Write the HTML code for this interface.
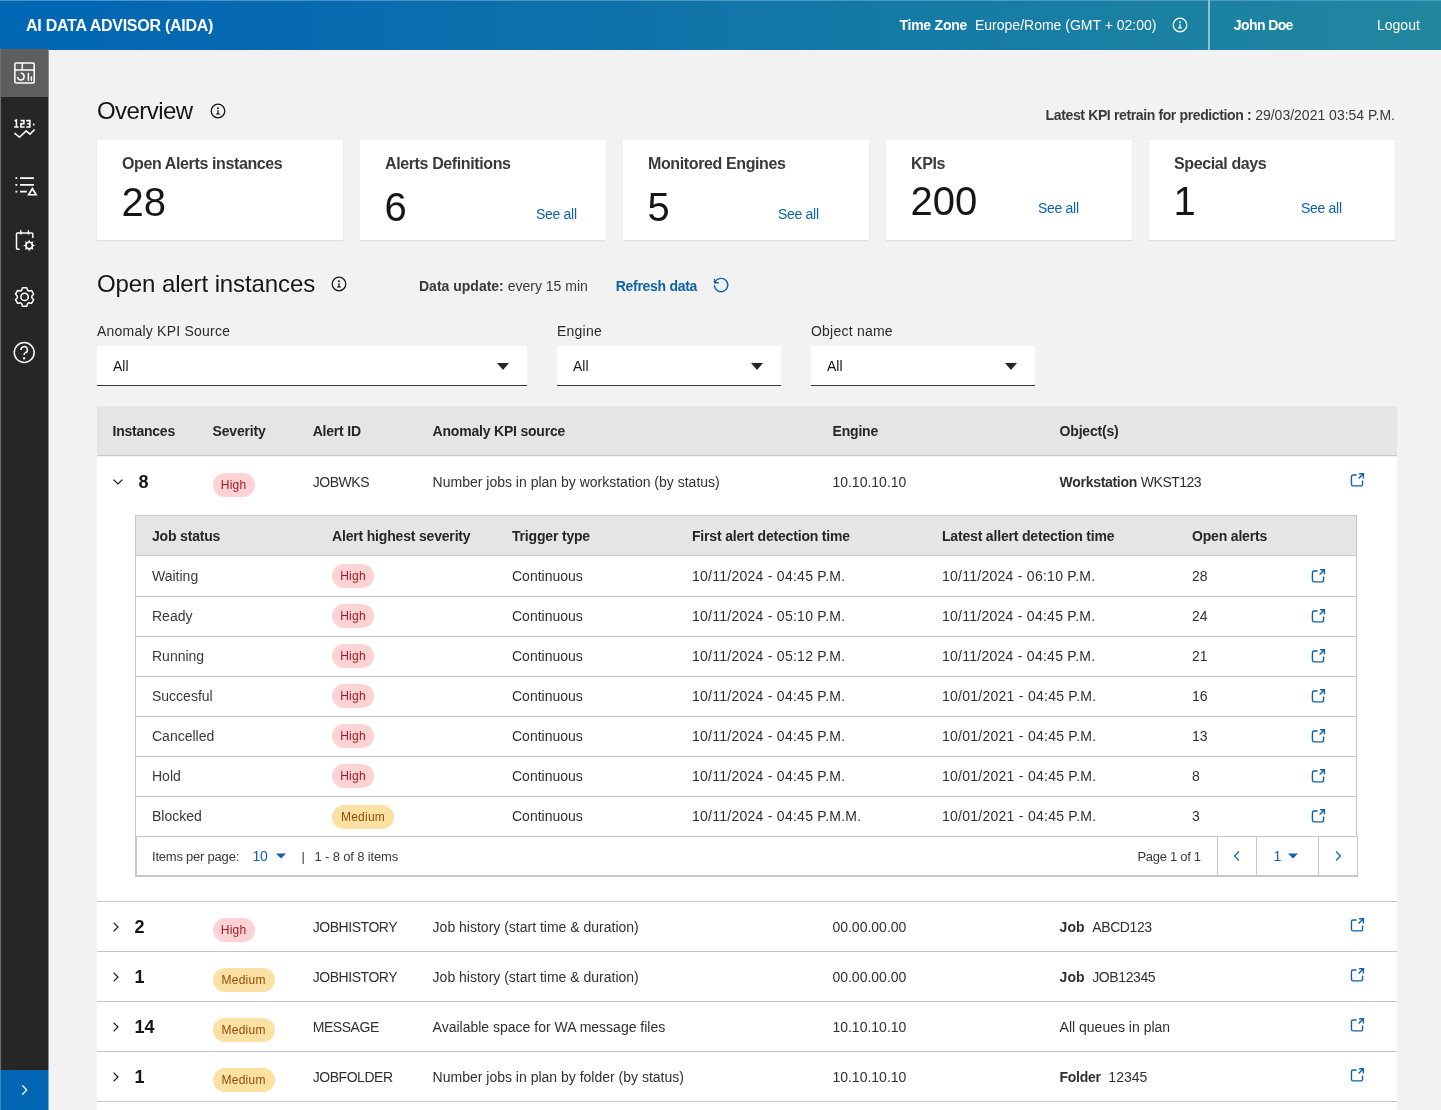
<!DOCTYPE html>
<html><head><meta charset="utf-8"><title>AIDA</title>
<style>
*{margin:0;padding:0;box-sizing:border-box}
html,body{width:1441px;height:1110px;overflow:hidden}
body{background:#f2f2f2;font-family:"Liberation Sans", sans-serif;position:relative;color:#161616;will-change:transform}
.t{position:absolute;white-space:nowrap;line-height:1}
.b{position:absolute}
.bd{position:absolute;height:24px;border-radius:12px;font-size:12px;line-height:25px;text-align:center;letter-spacing:.25px}
.hi{background:#ffd3d6;color:#a2191f}
.md{background:#fde0a3;color:#8c4f0a}
</style></head><body>
<div class="b" style="left:0px;top:0px;width:1441px;height:50px;background:linear-gradient(90deg,#0066b4 0%,#0568b2 15%,#1479a6 60%,#21879f 100%);"></div>
<div class="b" style="left:0px;top:0px;width:1441px;height:1px;background:#5b9fd0;opacity:.8"></div>
<div class="t" style="left:26px;top:18.06px;font-size:16px;font-weight:700;color:#fff;letter-spacing:-0.26px;">AI DATA ADVISOR (AIDA)</div>
<div class="t" style="left:899.4px;top:18.45px;font-size:14px;font-weight:700;color:#fff;letter-spacing:-0.22px;">Time Zone</div>
<div class="t" style="left:975px;top:18.45px;font-size:14px;font-weight:400;color:#fff;">Europe/Rome (GMT + 02:00)</div>
<svg class="b" style="left:1172.4px;top:17.4px" width="16" height="16" viewBox="0 0 16 16"><circle cx="8" cy="8" r="6.8" fill="none" stroke="#fff" stroke-width="1.25"/><circle cx="8" cy="5.3" r="1" fill="#fff"/><path d="M8 7.3v3.6" stroke="#fff" stroke-width="1.3" fill="none"/><path d="M6.1 11h3.8" stroke="#fff" stroke-width="1.1" fill="none"/></svg>
<div class="b" style="left:1208px;top:0px;width:2px;height:50px;background:#9ccbdb;opacity:.85"></div>
<div class="t" style="left:1233.8px;top:18.45px;font-size:14px;font-weight:700;color:#fff;letter-spacing:-0.6px;">John Doe</div>
<div class="t" style="left:1377px;top:18.45px;font-size:14px;font-weight:400;color:#fff;">Logout</div>
<div class="b" style="left:0px;top:49px;width:48px;height:1061px;background:#262626;"></div>
<div class="b" style="left:48px;top:49px;width:1px;height:1061px;background:#8c8c8c;"></div>
<div class="b" style="left:0px;top:49px;width:1px;height:1061px;background:#6e6e6e;"></div>
<div class="b" style="left:1px;top:49px;width:47px;height:48px;background:#5e5e5e;"></div>
<div class="b" style="left:0px;top:1070px;width:48px;height:40px;background:#0066b3;"></div>
<div class="b" style="left:48px;top:1070px;width:1px;height:40px;background:#7aaad4;"></div>
<div class="b" style="left:0px;top:1070px;width:1px;height:40px;background:#3a86c4;"></div>
<svg class="b" style="left:16px;top:1082px" width="16" height="16" viewBox="0 0 16 16"><path d="M6.2 3.2l4.6 4.8-4.6 4.8" fill="none" stroke="#fff" stroke-width="1.25"/></svg>
<svg class="b" style="left:10px;top:58px" width="30" height="30" viewBox="0 0 30 30"><rect x="4.85" y="5.05" width="19.35" height="19.85" rx="1.2" fill="none" stroke="#fff" stroke-width="1.5"/><path d="M4.85 11.9H24.2M12.3 5.05V11.9" fill="none" stroke="#fff" stroke-width="1.5"/><path d="M11.3 15.35A3.3 3.3 0 1 1 7.6 19.4" fill="none" stroke="#fff" stroke-width="1.5" stroke-linecap="round"/><path d="M18.4 15.6V22.2M21.4 19.1V22.2" fill="none" stroke="#fff" stroke-width="1.5" stroke-linecap="round"/></svg>
<svg class="b" style="left:10px;top:113px" width="30" height="30" viewBox="0 0 30 30"><path d="M4.6 7.8L6.4 7.2V14M4.2 14H8.6M10.6 7.6H13.9V10.8H10.9V14H14.6M16.2 7.6H19.9V14H16.2M17.2 10.8H19.9" fill="none" stroke="#fff" stroke-width="1.55"/><path d="M22.4 12.2L23.7 10L25 12.2Z" fill="#fff"/><path d="M4.4 20.2L9.5 24.2L16.2 17.9L20 21.1L24.6 16.5" fill="none" stroke="#fff" stroke-width="1.5" stroke-linejoin="round"/></svg>
<svg class="b" style="left:10px;top:171px" width="30" height="30" viewBox="0 0 30 30"><path d="M5.45 7.2H7.25M5.45 13.9H7.25M5.45 20.7H7.25M10 7.2H23.9M10 13.9H23.9M10 20.7H16.8" fill="none" stroke="#fff" stroke-width="1.8"/><path d="M22.35 17.6L18.6 23.75H26.1Z" fill="none" stroke="#fff" stroke-width="1.7" stroke-linejoin="miter"/></svg>
<svg class="b" style="left:10px;top:226px" width="30" height="30" viewBox="0 0 30 30"><path d="M9.7 23.2H7.5A1 1 0 0 1 6.5 22.2V7.9A1 1 0 0 1 7.5 6.9H21.8A1 1 0 0 1 22.8 7.9V11.9" fill="none" stroke="#fff" stroke-width="1.5"/><path d="M10.8 4.3V8.6M18.4 4.3V8.6" fill="none" stroke="#fff" stroke-width="1.5"/><circle cx="19.2" cy="19.5" r="3.25" fill="none" stroke="#fff" stroke-width="1.6"/><path d="M18.15 16.06 L19.20 13.40 L20.25 16.06ZM20.89 16.32 L23.51 15.19 L22.38 17.81ZM22.64 18.45 L25.30 19.50 L22.64 20.55ZM22.38 21.19 L23.51 23.81 L20.89 22.68ZM20.25 22.94 L19.20 25.60 L18.15 22.94ZM17.51 22.68 L14.89 23.81 L16.02 21.19ZM15.76 20.55 L13.10 19.50 L15.76 18.45ZM16.02 17.81 L14.89 15.19 L17.51 16.32Z" fill="#fff"/></svg>
<svg class="b" style="left:10px;top:282px" width="30" height="30" viewBox="0 0 30 30"><path d="M11.63 8.23 L12.46 5.64 L16.74 5.64 L17.57 8.23 L18.89 8.99 L21.55 8.42 L23.68 12.12 L21.86 14.14 L21.86 15.66 L23.68 17.68 L21.55 21.38 L18.89 20.81 L17.57 21.57 L16.74 24.16 L12.46 24.16 L11.63 21.57 L10.31 20.81 L7.65 21.38 L5.52 17.68 L7.34 15.66 L7.34 14.14 L5.52 12.12 L7.65 8.42 L10.31 8.99Z" fill="none" stroke="#fff" stroke-width="1.5" stroke-linejoin="round"/><circle cx="14.6" cy="14.9" r="3.7" fill="none" stroke="#fff" stroke-width="1.5"/></svg>
<svg class="b" style="left:10px;top:338px" width="30" height="30" viewBox="0 0 30 30"><circle cx="14.2" cy="14.5" r="9.95" fill="none" stroke="#fff" stroke-width="1.5"/><path d="M10.9 11.9A3.25 3.25 0 1 1 15.3 14.9C14.5 15.3 14.1 15.7 14.1 16.5V16.9" fill="none" stroke="#fff" stroke-width="1.5"/><rect x="13.05" y="19.25" width="2.1" height="2.1" fill="#fff"/></svg>
<div class="t" style="left:97px;top:98.68px;font-size:24px;font-weight:400;color:#161616;letter-spacing:-0.55px;">Overview</div>
<svg class="b" style="left:209.5px;top:102.8px" width="16" height="16" viewBox="0 0 16 16"><circle cx="8" cy="8" r="6.8" fill="none" stroke="#161616" stroke-width="1.25"/><circle cx="8" cy="5.3" r="1" fill="#161616"/><path d="M8 7.3v3.6" stroke="#161616" stroke-width="1.3" fill="none"/><path d="M6.1 11h3.8" stroke="#161616" stroke-width="1.1" fill="none"/></svg>
<div class="t" style="right:46px;top:107.65px;font-size:14px;font-weight:400;color:#393939;"><b style="letter-spacing:-0.37px">Latest KPI retrain for prediction :</b> 29/03/2021 03:54 P.M.</div>
<div class="b" style="left:97px;top:140px;width:246px;height:100px;background:#fff;box-shadow:0 1px 1px rgba(0,0,0,.07);"></div>
<div class="t" style="left:122px;top:155.66px;font-size:16px;font-weight:700;color:#393939;letter-spacing:-0.38px;">Open Alerts instances</div>
<div class="t" style="left:121.5px;top:182.14px;font-size:40px;font-weight:400;color:#161616;">28</div>
<div class="b" style="left:360px;top:140px;width:246px;height:100px;background:#fff;box-shadow:0 1px 1px rgba(0,0,0,.07);"></div>
<div class="t" style="left:385px;top:155.66px;font-size:16px;font-weight:700;color:#393939;letter-spacing:-0.38px;">Alerts Definitions</div>
<div class="t" style="left:384.5px;top:186.64px;font-size:40px;font-weight:400;color:#161616;">6</div>
<div class="t" style="left:536px;top:207.15px;font-size:14px;font-weight:400;color:#0f62a8;letter-spacing:-0.3px;">See all</div>
<div class="b" style="left:623px;top:140px;width:246px;height:100px;background:#fff;box-shadow:0 1px 1px rgba(0,0,0,.07);"></div>
<div class="t" style="left:648px;top:155.66px;font-size:16px;font-weight:700;color:#393939;letter-spacing:-0.38px;">Monitored Engines</div>
<div class="t" style="left:647.5px;top:186.64px;font-size:40px;font-weight:400;color:#161616;">5</div>
<div class="t" style="left:778px;top:207.15px;font-size:14px;font-weight:400;color:#0f62a8;letter-spacing:-0.3px;">See all</div>
<div class="b" style="left:886px;top:140px;width:246px;height:100px;background:#fff;box-shadow:0 1px 1px rgba(0,0,0,.07);"></div>
<div class="t" style="left:911px;top:155.66px;font-size:16px;font-weight:700;color:#393939;letter-spacing:-0.38px;">KPIs</div>
<div class="t" style="left:910.5px;top:180.64px;font-size:40px;font-weight:400;color:#161616;">200</div>
<div class="t" style="left:1038px;top:201.15px;font-size:14px;font-weight:400;color:#0f62a8;letter-spacing:-0.3px;">See all</div>
<div class="b" style="left:1149px;top:140px;width:246px;height:100px;background:#fff;box-shadow:0 1px 1px rgba(0,0,0,.07);"></div>
<div class="t" style="left:1174px;top:155.66px;font-size:16px;font-weight:700;color:#393939;letter-spacing:-0.38px;">Special days</div>
<div class="t" style="left:1173.5px;top:180.64px;font-size:40px;font-weight:400;color:#161616;">1</div>
<div class="t" style="left:1301px;top:201.15px;font-size:14px;font-weight:400;color:#0f62a8;letter-spacing:-0.3px;">See all</div>
<div class="t" style="left:97px;top:271.68px;font-size:24px;font-weight:400;color:#161616;letter-spacing:-0.1px;">Open alert instances</div>
<svg class="b" style="left:331px;top:276px" width="16" height="16" viewBox="0 0 16 16"><circle cx="8" cy="8" r="6.8" fill="none" stroke="#161616" stroke-width="1.25"/><circle cx="8" cy="5.3" r="1" fill="#161616"/><path d="M8 7.3v3.6" stroke="#161616" stroke-width="1.3" fill="none"/><path d="M6.1 11h3.8" stroke="#161616" stroke-width="1.1" fill="none"/></svg>
<div class="t" style="left:419px;top:279.15px;font-size:14px;font-weight:400;color:#393939;"><b>Data update:</b> every 15 min</div>
<div class="t" style="left:615.8px;top:279.15px;font-size:14px;font-weight:700;color:#0f62a8;letter-spacing:-0.3px;">Refresh data</div>
<svg class="b" style="left:712.4px;top:276px" width="18" height="18" viewBox="0 0 18 18"><path d="M2.4 9.3A6.7 6.7 0 1 0 3.13 5.96" fill="none" stroke="#0f62a8" stroke-width="1.35"/><path d="M2.5 3.0V6.7H6.7" fill="none" stroke="#0f62a8" stroke-width="1.35"/></svg>
<div class="t" style="left:97px;top:324.35px;font-size:14px;font-weight:400;color:#2a2a2a;letter-spacing:0.22px;">Anomaly KPI Source</div>
<div class="b" style="left:97px;top:346px;width:430px;height:40px;background:#fff;border-bottom:1px solid #393939;"></div>
<div class="t" style="left:113px;top:359.45px;font-size:14px;font-weight:400;color:#161616;">All</div>
<svg class="b" style="left:496px;top:362px" width="14" height="9" viewBox="0 0 14 9"><path d="M1 1h12L7 8z" fill="#262626"/></svg>
<div class="t" style="left:557px;top:324.35px;font-size:14px;font-weight:400;color:#2a2a2a;letter-spacing:0.22px;">Engine</div>
<div class="b" style="left:557px;top:346px;width:224px;height:40px;background:#fff;border-bottom:1px solid #393939;"></div>
<div class="t" style="left:573px;top:359.45px;font-size:14px;font-weight:400;color:#161616;">All</div>
<svg class="b" style="left:750px;top:362px" width="14" height="9" viewBox="0 0 14 9"><path d="M1 1h12L7 8z" fill="#262626"/></svg>
<div class="t" style="left:811px;top:324.35px;font-size:14px;font-weight:400;color:#2a2a2a;letter-spacing:0.22px;">Object name</div>
<div class="b" style="left:811px;top:346px;width:224px;height:40px;background:#fff;border-bottom:1px solid #393939;"></div>
<div class="t" style="left:827px;top:359.45px;font-size:14px;font-weight:400;color:#161616;">All</div>
<svg class="b" style="left:1004px;top:362px" width="14" height="9" viewBox="0 0 14 9"><path d="M1 1h12L7 8z" fill="#262626"/></svg>
<div class="b" style="left:97px;top:406px;width:1300px;height:50px;background:#e5e5e5;border-bottom:1px solid #c6c6c6;"></div>
<div class="t" style="left:112.6px;top:424.15px;font-size:14px;font-weight:700;color:#262626;letter-spacing:-0.25px;">Instances</div>
<div class="t" style="left:212.6px;top:424.15px;font-size:14px;font-weight:700;color:#262626;letter-spacing:-0.2px;">Severity</div>
<div class="t" style="left:312.7px;top:424.15px;font-size:14px;font-weight:700;color:#262626;letter-spacing:-0.2px;">Alert ID</div>
<div class="t" style="left:432.6px;top:424.15px;font-size:14px;font-weight:700;color:#262626;letter-spacing:-0.2px;">Anomaly KPI source</div>
<div class="t" style="left:832.6px;top:424.15px;font-size:14px;font-weight:700;color:#262626;letter-spacing:-0.2px;">Engine</div>
<div class="t" style="left:1059.6px;top:424.15px;font-size:14px;font-weight:700;color:#262626;letter-spacing:-0.2px;">Object(s)</div>
<div class="b" style="left:97px;top:457px;width:1300px;height:444px;background:#fff;"></div>
<svg class="b" style="left:110.5px;top:475px" width="14" height="14" viewBox="0 0 14 14"><path d="M2.6 4.6L7 9l4.4-4.4" fill="none" stroke="#161616" stroke-width="1.2"/></svg>
<div class="t" style="left:138.5px;top:472.76px;font-size:18px;font-weight:700;color:#161616;">8</div>
<div class="bd hi" style="left:212.6px;top:473.2px;width:42px">High</div>
<div class="t" style="left:312.7px;top:475.15px;font-size:14px;font-weight:400;color:#303030;letter-spacing:-0.45px;">JOBWKS</div>
<div class="t" style="left:432.6px;top:475.15px;font-size:14px;font-weight:400;color:#303030;">Number jobs in plan by workstation (by status)</div>
<div class="t" style="left:832.4px;top:475.15px;font-size:14px;font-weight:400;color:#303030;">10.10.10.10</div>
<div class="t" style="left:1059.6px;top:475.15px;font-size:14px;font-weight:400;color:#303030;"><b style="letter-spacing:-0.3px">Workstation</b> <span style="letter-spacing:-0.5px">WKST123</span></div>
<svg class="b" style="left:1344.2px;top:467px" width="26" height="26" viewBox="0 0 26 26"><path d="M12.6 7.95H9.2A1.75 1.75 0 0 0 7.45 9.7V17.15A1.75 1.75 0 0 0 9.2 18.9H16.8A1.75 1.75 0 0 0 18.55 17.15V13.4" fill="none" stroke="#0f62a8" stroke-width="1.4"/><path d="M15.1 6.8H19.4V11.4M19.2 7L14.6 11.6" fill="none" stroke="#0f62a8" stroke-width="1.4"/></svg>
<div class="b" style="left:135px;top:515px;width:1222px;height:322px;border:1px solid #c6c6c6;border-bottom:none;background:#fff;"></div>
<div class="b" style="left:136px;top:516px;width:1220px;height:40px;background:#e5e5e5;border-bottom:1px solid #c6c6c6;"></div>
<div class="t" style="left:152px;top:528.75px;font-size:14px;font-weight:700;color:#262626;letter-spacing:-0.18px;">Job status</div>
<div class="t" style="left:332px;top:528.75px;font-size:14px;font-weight:700;color:#262626;letter-spacing:-0.18px;">Alert highest severity</div>
<div class="t" style="left:512px;top:528.75px;font-size:14px;font-weight:700;color:#262626;letter-spacing:-0.18px;">Trigger type</div>
<div class="t" style="left:692px;top:528.75px;font-size:14px;font-weight:700;color:#262626;letter-spacing:-0.18px;">First alert detection time</div>
<div class="t" style="left:942px;top:528.75px;font-size:14px;font-weight:700;color:#262626;letter-spacing:-0.18px;">Latest allert detection time</div>
<div class="t" style="left:1192px;top:528.75px;font-size:14px;font-weight:700;color:#262626;letter-spacing:-0.18px;">Open alerts</div>
<div class="t" style="left:152px;top:568.95px;font-size:14px;font-weight:400;color:#393939;">Waiting</div>
<div class="bd hi" style="left:332px;top:564px;width:42px">High</div>
<div class="t" style="left:512px;top:568.95px;font-size:14px;font-weight:400;color:#303030;">Continuous</div>
<div class="t" style="left:692px;top:568.95px;font-size:14px;font-weight:400;color:#303030;letter-spacing:0.26px;">10/11/2024 - 04:45 P.M.</div>
<div class="t" style="left:942px;top:568.95px;font-size:14px;font-weight:400;color:#303030;letter-spacing:0.26px;">10/11/2024 - 06:10 P.M.</div>
<div class="t" style="left:1192px;top:568.95px;font-size:14px;font-weight:400;color:#303030;">28</div>
<svg class="b" style="left:1305px;top:563px" width="26" height="26" viewBox="0 0 26 26"><path d="M12.6 7.95H9.2A1.75 1.75 0 0 0 7.45 9.7V17.15A1.75 1.75 0 0 0 9.2 18.9H16.8A1.75 1.75 0 0 0 18.55 17.15V13.4" fill="none" stroke="#0f62a8" stroke-width="1.4"/><path d="M15.1 6.8H19.4V11.4M19.2 7L14.6 11.6" fill="none" stroke="#0f62a8" stroke-width="1.4"/></svg>
<div class="b" style="left:136px;top:596px;width:1220px;height:1px;background:#c6c6c6;"></div>
<div class="t" style="left:152px;top:608.95px;font-size:14px;font-weight:400;color:#393939;">Ready</div>
<div class="bd hi" style="left:332px;top:604px;width:42px">High</div>
<div class="t" style="left:512px;top:608.95px;font-size:14px;font-weight:400;color:#303030;">Continuous</div>
<div class="t" style="left:692px;top:608.95px;font-size:14px;font-weight:400;color:#303030;letter-spacing:0.26px;">10/11/2024 - 05:10 P.M.</div>
<div class="t" style="left:942px;top:608.95px;font-size:14px;font-weight:400;color:#303030;letter-spacing:0.26px;">10/11/2024 - 04:45 P.M.</div>
<div class="t" style="left:1192px;top:608.95px;font-size:14px;font-weight:400;color:#303030;">24</div>
<svg class="b" style="left:1305px;top:603px" width="26" height="26" viewBox="0 0 26 26"><path d="M12.6 7.95H9.2A1.75 1.75 0 0 0 7.45 9.7V17.15A1.75 1.75 0 0 0 9.2 18.9H16.8A1.75 1.75 0 0 0 18.55 17.15V13.4" fill="none" stroke="#0f62a8" stroke-width="1.4"/><path d="M15.1 6.8H19.4V11.4M19.2 7L14.6 11.6" fill="none" stroke="#0f62a8" stroke-width="1.4"/></svg>
<div class="b" style="left:136px;top:636px;width:1220px;height:1px;background:#c6c6c6;"></div>
<div class="t" style="left:152px;top:648.95px;font-size:14px;font-weight:400;color:#393939;">Running</div>
<div class="bd hi" style="left:332px;top:644px;width:42px">High</div>
<div class="t" style="left:512px;top:648.95px;font-size:14px;font-weight:400;color:#303030;">Continuous</div>
<div class="t" style="left:692px;top:648.95px;font-size:14px;font-weight:400;color:#303030;letter-spacing:0.26px;">10/11/2024 - 05:12 P.M.</div>
<div class="t" style="left:942px;top:648.95px;font-size:14px;font-weight:400;color:#303030;letter-spacing:0.26px;">10/11/2024 - 04:45 P.M.</div>
<div class="t" style="left:1192px;top:648.95px;font-size:14px;font-weight:400;color:#303030;">21</div>
<svg class="b" style="left:1305px;top:643px" width="26" height="26" viewBox="0 0 26 26"><path d="M12.6 7.95H9.2A1.75 1.75 0 0 0 7.45 9.7V17.15A1.75 1.75 0 0 0 9.2 18.9H16.8A1.75 1.75 0 0 0 18.55 17.15V13.4" fill="none" stroke="#0f62a8" stroke-width="1.4"/><path d="M15.1 6.8H19.4V11.4M19.2 7L14.6 11.6" fill="none" stroke="#0f62a8" stroke-width="1.4"/></svg>
<div class="b" style="left:136px;top:676px;width:1220px;height:1px;background:#c6c6c6;"></div>
<div class="t" style="left:152px;top:688.95px;font-size:14px;font-weight:400;color:#393939;">Succesful</div>
<div class="bd hi" style="left:332px;top:684px;width:42px">High</div>
<div class="t" style="left:512px;top:688.95px;font-size:14px;font-weight:400;color:#303030;">Continuous</div>
<div class="t" style="left:692px;top:688.95px;font-size:14px;font-weight:400;color:#303030;letter-spacing:0.26px;">10/11/2024 - 04:45 P.M.</div>
<div class="t" style="left:942px;top:688.95px;font-size:14px;font-weight:400;color:#303030;letter-spacing:0.26px;">10/01/2021 - 04:45 P.M.</div>
<div class="t" style="left:1192px;top:688.95px;font-size:14px;font-weight:400;color:#303030;">16</div>
<svg class="b" style="left:1305px;top:683px" width="26" height="26" viewBox="0 0 26 26"><path d="M12.6 7.95H9.2A1.75 1.75 0 0 0 7.45 9.7V17.15A1.75 1.75 0 0 0 9.2 18.9H16.8A1.75 1.75 0 0 0 18.55 17.15V13.4" fill="none" stroke="#0f62a8" stroke-width="1.4"/><path d="M15.1 6.8H19.4V11.4M19.2 7L14.6 11.6" fill="none" stroke="#0f62a8" stroke-width="1.4"/></svg>
<div class="b" style="left:136px;top:716px;width:1220px;height:1px;background:#c6c6c6;"></div>
<div class="t" style="left:152px;top:728.95px;font-size:14px;font-weight:400;color:#393939;">Cancelled</div>
<div class="bd hi" style="left:332px;top:724px;width:42px">High</div>
<div class="t" style="left:512px;top:728.95px;font-size:14px;font-weight:400;color:#303030;">Continuous</div>
<div class="t" style="left:692px;top:728.95px;font-size:14px;font-weight:400;color:#303030;letter-spacing:0.26px;">10/11/2024 - 04:45 P.M.</div>
<div class="t" style="left:942px;top:728.95px;font-size:14px;font-weight:400;color:#303030;letter-spacing:0.26px;">10/01/2021 - 04:45 P.M.</div>
<div class="t" style="left:1192px;top:728.95px;font-size:14px;font-weight:400;color:#303030;">13</div>
<svg class="b" style="left:1305px;top:723px" width="26" height="26" viewBox="0 0 26 26"><path d="M12.6 7.95H9.2A1.75 1.75 0 0 0 7.45 9.7V17.15A1.75 1.75 0 0 0 9.2 18.9H16.8A1.75 1.75 0 0 0 18.55 17.15V13.4" fill="none" stroke="#0f62a8" stroke-width="1.4"/><path d="M15.1 6.8H19.4V11.4M19.2 7L14.6 11.6" fill="none" stroke="#0f62a8" stroke-width="1.4"/></svg>
<div class="b" style="left:136px;top:756px;width:1220px;height:1px;background:#c6c6c6;"></div>
<div class="t" style="left:152px;top:768.95px;font-size:14px;font-weight:400;color:#393939;">Hold</div>
<div class="bd hi" style="left:332px;top:764px;width:42px">High</div>
<div class="t" style="left:512px;top:768.95px;font-size:14px;font-weight:400;color:#303030;">Continuous</div>
<div class="t" style="left:692px;top:768.95px;font-size:14px;font-weight:400;color:#303030;letter-spacing:0.26px;">10/11/2024 - 04:45 P.M.</div>
<div class="t" style="left:942px;top:768.95px;font-size:14px;font-weight:400;color:#303030;letter-spacing:0.26px;">10/01/2021 - 04:45 P.M.</div>
<div class="t" style="left:1192px;top:768.95px;font-size:14px;font-weight:400;color:#303030;">8</div>
<svg class="b" style="left:1305px;top:763px" width="26" height="26" viewBox="0 0 26 26"><path d="M12.6 7.95H9.2A1.75 1.75 0 0 0 7.45 9.7V17.15A1.75 1.75 0 0 0 9.2 18.9H16.8A1.75 1.75 0 0 0 18.55 17.15V13.4" fill="none" stroke="#0f62a8" stroke-width="1.4"/><path d="M15.1 6.8H19.4V11.4M19.2 7L14.6 11.6" fill="none" stroke="#0f62a8" stroke-width="1.4"/></svg>
<div class="b" style="left:136px;top:796px;width:1220px;height:1px;background:#c6c6c6;"></div>
<div class="t" style="left:152px;top:808.95px;font-size:14px;font-weight:400;color:#393939;">Blocked</div>
<div class="bd md" style="left:332px;top:805px;width:62px">Medium</div>
<div class="t" style="left:512px;top:808.95px;font-size:14px;font-weight:400;color:#303030;">Continuous</div>
<div class="t" style="left:692px;top:808.95px;font-size:14px;font-weight:400;color:#303030;letter-spacing:0.26px;">10/11/2024 - 04:45 P.M.M.</div>
<div class="t" style="left:942px;top:808.95px;font-size:14px;font-weight:400;color:#303030;letter-spacing:0.26px;">10/01/2021 - 04:45 P.M.</div>
<div class="t" style="left:1192px;top:808.95px;font-size:14px;font-weight:400;color:#303030;">3</div>
<svg class="b" style="left:1305px;top:803px" width="26" height="26" viewBox="0 0 26 26"><path d="M12.6 7.95H9.2A1.75 1.75 0 0 0 7.45 9.7V17.15A1.75 1.75 0 0 0 9.2 18.9H16.8A1.75 1.75 0 0 0 18.55 17.15V13.4" fill="none" stroke="#0f62a8" stroke-width="1.4"/><path d="M15.1 6.8H19.4V11.4M19.2 7L14.6 11.6" fill="none" stroke="#0f62a8" stroke-width="1.4"/></svg>
<div class="b" style="left:135px;top:836px;width:1223px;height:41px;background:#fff;border-top:1px solid #c6c6c6;border-left:2px solid #c6c6c6;border-right:1px solid #c6c6c6;border-bottom:2px solid #c6c6c6;"></div>
<div class="t" style="left:152px;top:849.50px;font-size:13px;font-weight:400;color:#393939;letter-spacing:-0.22px;">Items per page:</div>
<div class="t" style="left:252.5px;top:849.15px;font-size:14px;font-weight:400;color:#0f62a8;letter-spacing:-0.3px;">10</div>
<svg class="b" style="left:275px;top:852px" width="12" height="8" viewBox="0 0 12 8"><path d="M1 1.5h10L6 6.5z" fill="#0f62a8"/></svg>
<div class="t" style="left:301.5px;top:849.50px;font-size:13px;font-weight:400;color:#393939;">|</div>
<div class="t" style="left:314.5px;top:849.50px;font-size:13px;font-weight:400;color:#393939;letter-spacing:-0.15px;">1 - 8 of 8 items</div>
<div class="t" style="left:1137.5px;top:849.50px;font-size:13px;font-weight:400;color:#393939;letter-spacing:-0.3px;">Page 1 of 1</div>
<div class="b" style="left:1217px;top:837px;width:1px;height:38px;background:#c6c6c6;"></div>
<div class="b" style="left:1256px;top:837px;width:1px;height:38px;background:#c6c6c6;"></div>
<div class="b" style="left:1318px;top:837px;width:1px;height:38px;background:#c6c6c6;"></div>
<svg class="b" style="left:1229px;top:848px" width="16" height="16" viewBox="0 0 16 16"><path d="M10 3.5L5.5 8l4.5 4.5" fill="none" stroke="#0f62a8" stroke-width="1.2"/></svg>
<div class="t" style="left:1273.5px;top:849.15px;font-size:14px;font-weight:400;color:#0f62a8;">1</div>
<svg class="b" style="left:1287px;top:852px" width="12" height="8" viewBox="0 0 12 8"><path d="M1 1.5h10L6 6.5z" fill="#0f62a8"/></svg>
<svg class="b" style="left:1330px;top:848px" width="16" height="16" viewBox="0 0 16 16"><path d="M6 3.5l4.5 4.5L6 12.5" fill="none" stroke="#0f62a8" stroke-width="1.2"/></svg>
<div class="b" style="left:97px;top:901px;width:1300px;height:50px;background:#fff;border-top:1px solid #c6c6c6;"></div>
<svg class="b" style="left:108.5px;top:920.4px" width="14" height="14" viewBox="0 0 14 14"><path d="M4.6 2.6L9 7l-4.4 4.4" fill="none" stroke="#161616" stroke-width="1.2"/></svg>
<div class="t" style="left:134.5px;top:918.36px;font-size:18px;font-weight:700;color:#161616;">2</div>
<div class="bd hi" style="left:212.6px;top:918px;width:42px">High</div>
<div class="t" style="left:312.7px;top:919.75px;font-size:14px;font-weight:400;color:#303030;letter-spacing:-0.45px;">JOBHISTORY</div>
<div class="t" style="left:432.6px;top:919.75px;font-size:14px;font-weight:400;color:#303030;">Job history (start time &amp; duration)</div>
<div class="t" style="left:832.4px;top:919.75px;font-size:14px;font-weight:400;color:#303030;">00.00.00.00</div>
<div class="t" style="left:1059.6px;top:919.75px;font-size:14px;font-weight:400;color:#303030;"><b>Job</b>&nbsp; <span style="letter-spacing:-0.4px">ABCD123</span></div>
<svg class="b" style="left:1344.2px;top:912.2px" width="26" height="26" viewBox="0 0 26 26"><path d="M12.6 7.95H9.2A1.75 1.75 0 0 0 7.45 9.7V17.15A1.75 1.75 0 0 0 9.2 18.9H16.8A1.75 1.75 0 0 0 18.55 17.15V13.4" fill="none" stroke="#0f62a8" stroke-width="1.4"/><path d="M15.1 6.8H19.4V11.4M19.2 7L14.6 11.6" fill="none" stroke="#0f62a8" stroke-width="1.4"/></svg>
<div class="b" style="left:97px;top:951px;width:1300px;height:50px;background:#fff;border-top:1px solid #c6c6c6;"></div>
<svg class="b" style="left:108.5px;top:970.4px" width="14" height="14" viewBox="0 0 14 14"><path d="M4.6 2.6L9 7l-4.4 4.4" fill="none" stroke="#161616" stroke-width="1.2"/></svg>
<div class="t" style="left:134.5px;top:968.36px;font-size:18px;font-weight:700;color:#161616;">1</div>
<div class="bd md" style="left:212.6px;top:968px;width:62px">Medium</div>
<div class="t" style="left:312.7px;top:969.75px;font-size:14px;font-weight:400;color:#303030;letter-spacing:-0.45px;">JOBHISTORY</div>
<div class="t" style="left:432.6px;top:969.75px;font-size:14px;font-weight:400;color:#303030;">Job history (start time &amp; duration)</div>
<div class="t" style="left:832.4px;top:969.75px;font-size:14px;font-weight:400;color:#303030;">00.00.00.00</div>
<div class="t" style="left:1059.6px;top:969.75px;font-size:14px;font-weight:400;color:#303030;"><b>Job</b>&nbsp; <span style="letter-spacing:-0.4px">JOB12345</span></div>
<svg class="b" style="left:1344.2px;top:962.2px" width="26" height="26" viewBox="0 0 26 26"><path d="M12.6 7.95H9.2A1.75 1.75 0 0 0 7.45 9.7V17.15A1.75 1.75 0 0 0 9.2 18.9H16.8A1.75 1.75 0 0 0 18.55 17.15V13.4" fill="none" stroke="#0f62a8" stroke-width="1.4"/><path d="M15.1 6.8H19.4V11.4M19.2 7L14.6 11.6" fill="none" stroke="#0f62a8" stroke-width="1.4"/></svg>
<div class="b" style="left:97px;top:1001px;width:1300px;height:50px;background:#fff;border-top:1px solid #c6c6c6;"></div>
<svg class="b" style="left:108.5px;top:1020.4px" width="14" height="14" viewBox="0 0 14 14"><path d="M4.6 2.6L9 7l-4.4 4.4" fill="none" stroke="#161616" stroke-width="1.2"/></svg>
<div class="t" style="left:134.5px;top:1018.36px;font-size:18px;font-weight:700;color:#161616;">14</div>
<div class="bd md" style="left:212.6px;top:1018px;width:62px">Medium</div>
<div class="t" style="left:312.7px;top:1019.75px;font-size:14px;font-weight:400;color:#303030;letter-spacing:-0.45px;">MESSAGE</div>
<div class="t" style="left:432.6px;top:1019.75px;font-size:14px;font-weight:400;color:#303030;">Available space for WA message files</div>
<div class="t" style="left:832.4px;top:1019.75px;font-size:14px;font-weight:400;color:#303030;">10.10.10.10</div>
<div class="t" style="left:1059.6px;top:1019.75px;font-size:14px;font-weight:400;color:#303030;">All queues in plan</div>
<svg class="b" style="left:1344.2px;top:1012.2px" width="26" height="26" viewBox="0 0 26 26"><path d="M12.6 7.95H9.2A1.75 1.75 0 0 0 7.45 9.7V17.15A1.75 1.75 0 0 0 9.2 18.9H16.8A1.75 1.75 0 0 0 18.55 17.15V13.4" fill="none" stroke="#0f62a8" stroke-width="1.4"/><path d="M15.1 6.8H19.4V11.4M19.2 7L14.6 11.6" fill="none" stroke="#0f62a8" stroke-width="1.4"/></svg>
<div class="b" style="left:97px;top:1051px;width:1300px;height:50px;background:#fff;border-top:1px solid #c6c6c6;"></div>
<svg class="b" style="left:108.5px;top:1070.4px" width="14" height="14" viewBox="0 0 14 14"><path d="M4.6 2.6L9 7l-4.4 4.4" fill="none" stroke="#161616" stroke-width="1.2"/></svg>
<div class="t" style="left:134.5px;top:1068.36px;font-size:18px;font-weight:700;color:#161616;">1</div>
<div class="bd md" style="left:212.6px;top:1068px;width:62px">Medium</div>
<div class="t" style="left:312.7px;top:1069.75px;font-size:14px;font-weight:400;color:#303030;letter-spacing:-0.45px;">JOBFOLDER</div>
<div class="t" style="left:432.6px;top:1069.75px;font-size:14px;font-weight:400;color:#303030;">Number jobs in plan by folder (by status)</div>
<div class="t" style="left:832.4px;top:1069.75px;font-size:14px;font-weight:400;color:#303030;">10.10.10.10</div>
<div class="t" style="left:1059.6px;top:1069.75px;font-size:14px;font-weight:400;color:#303030;"><b style="letter-spacing:-0.3px">Folder</b>&nbsp; 12345</div>
<svg class="b" style="left:1344.2px;top:1062.2px" width="26" height="26" viewBox="0 0 26 26"><path d="M12.6 7.95H9.2A1.75 1.75 0 0 0 7.45 9.7V17.15A1.75 1.75 0 0 0 9.2 18.9H16.8A1.75 1.75 0 0 0 18.55 17.15V13.4" fill="none" stroke="#0f62a8" stroke-width="1.4"/><path d="M15.1 6.8H19.4V11.4M19.2 7L14.6 11.6" fill="none" stroke="#0f62a8" stroke-width="1.4"/></svg>
<div class="b" style="left:97px;top:1101px;width:1300px;height:50px;background:#fff;border-top:1px solid #c6c6c6;"></div>

</body></html>
